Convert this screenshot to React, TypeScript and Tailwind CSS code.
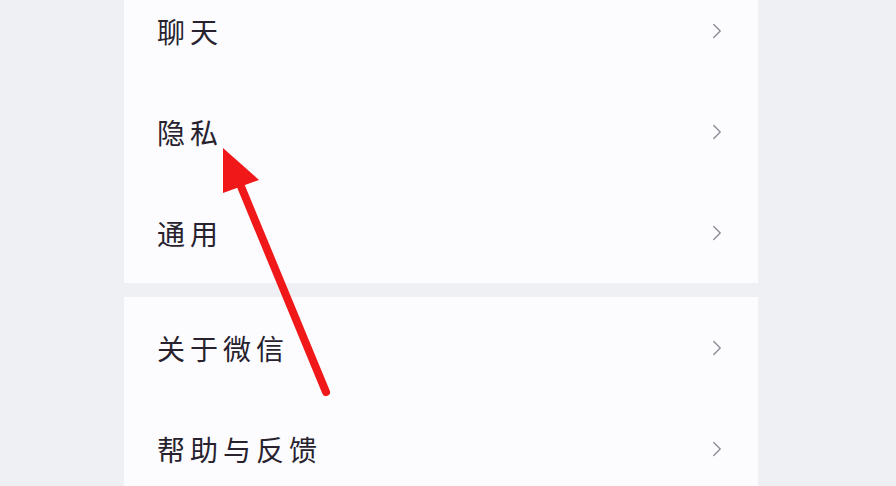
import { ChevronRight } from 'lucide-react';

const groups = [['聊天', '隐私', '通用'], ['关于微信', '帮助与反馈']];

function Row({ label }: { label: string }) {
  return (
    <div className="flex h-[101px] items-center justify-between pl-[33px] pr-[28px]">
      <span className="text-[28px] leading-none tracking-[5px] text-[#27222e]">{label}</span>
      <ChevronRight className="h-[26px] w-[26px] text-[#8d8893]" strokeWidth={1.2} />
    </div>
  );
}

export default function App() {
  return (
    <div
      className="relative h-[486px] w-[896px] overflow-hidden bg-[#eff0f3]"
      style={{ fontFamily: '"Noto Sans CJK SC", "Noto Sans", sans-serif' }}
    >
      <div className="ml-[124px] flex w-[634px] flex-col gap-[14px] pt-px">
        <div className="-mt-[21px] bg-[#fcfcfe]">
          {groups[0].map((l) => (
            <Row key={l} label={l} />
          ))}
        </div>
        <div className="bg-[#fcfcfe]">
          {groups[1].map((l) => (
            <Row key={l} label={l} />
          ))}
        </div>
      </div>
      <svg className="absolute left-0 top-0" width="896" height="486" viewBox="0 0 896 486">
        <line x1="240" y1="184" x2="326" y2="392" stroke="#f01818" strokeWidth="8" strokeLinecap="round" />
        <polygon points="223,148 259,180 223,193" fill="#f01818" />
      </svg>
    </div>
  );
}
